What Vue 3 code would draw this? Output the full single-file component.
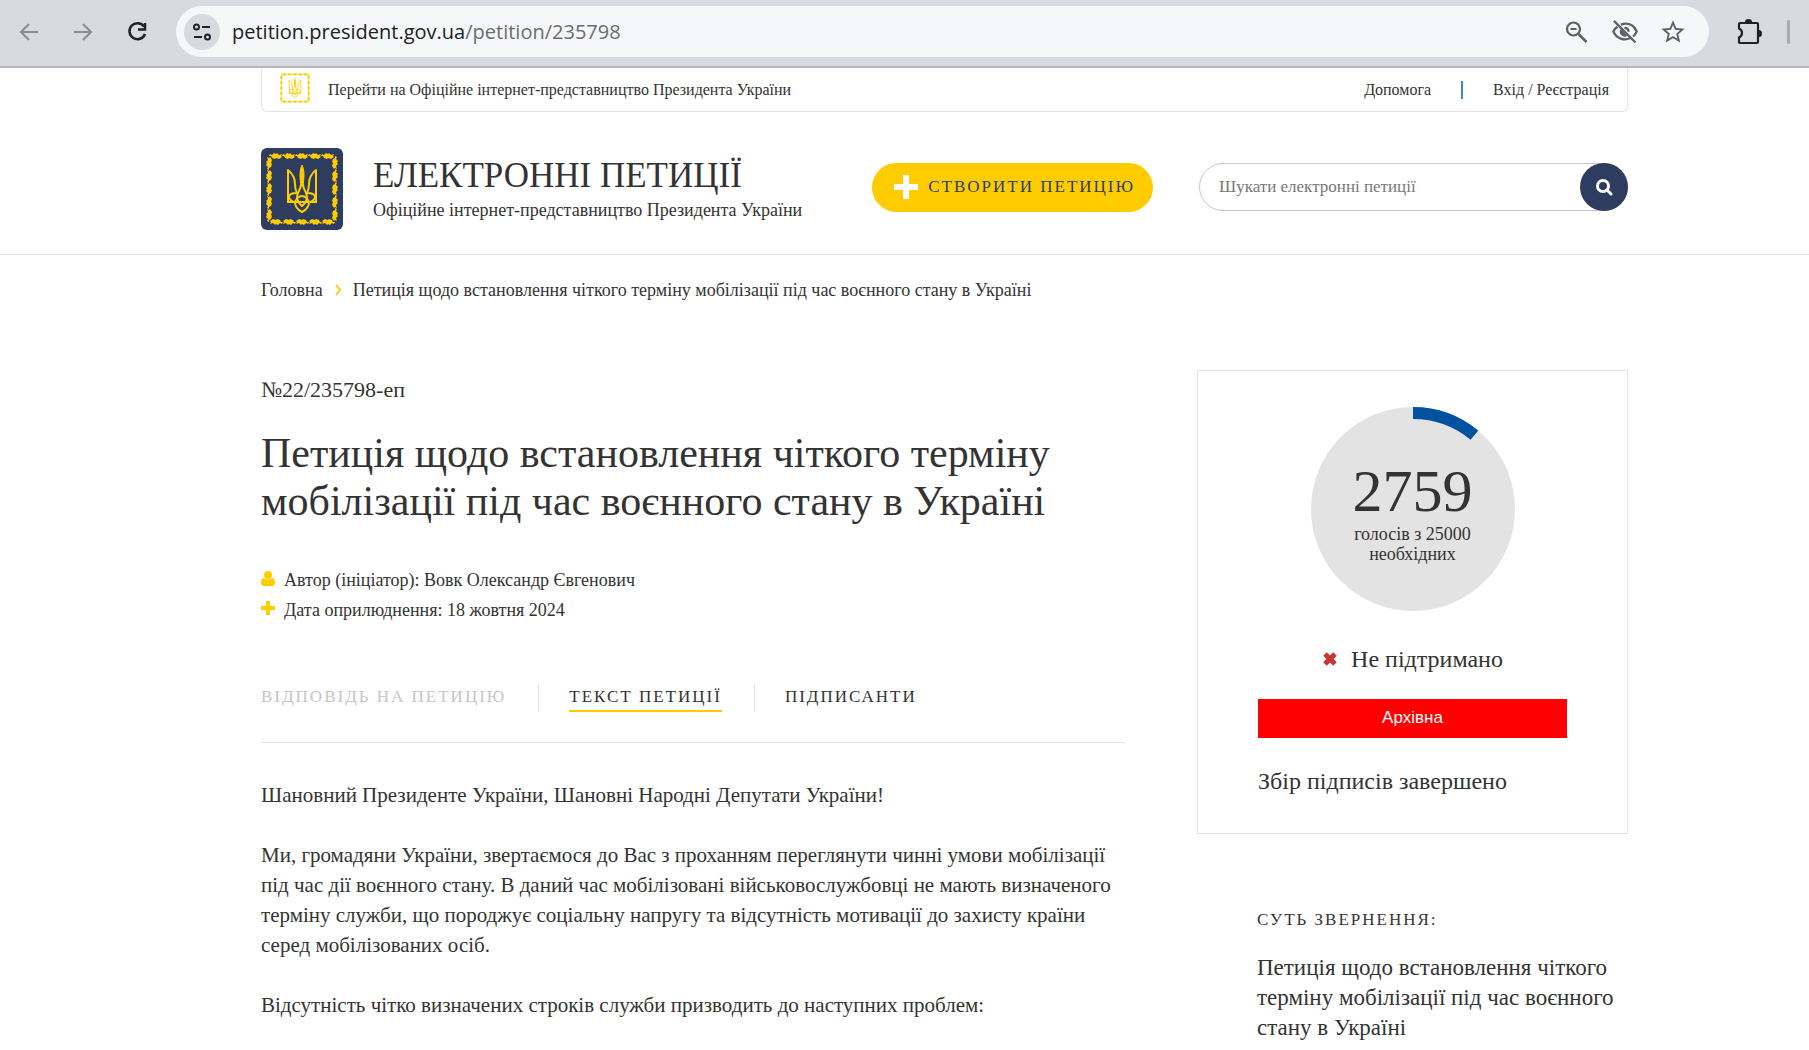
<script setup>
import { computed, ref } from "vue";

const title = "Петиція щодо встановлення чіткого терміну мобілізації під час воєнного стану в Україні";

const votes = 2759;
const required = 25000;

const tabs = [
  { id: "answer", label: "Відповідь на петицію", disabled: true },
  { id: "text", label: "Текст петиції", disabled: false },
  { id: "signers", label: "Підписанти", disabled: false },
];
const activeTab = ref("text");
const query = ref("");

const paragraphs = [
  "Шановний Президенте України, Шановні Народні Депутати України!",
  "Ми, громадяни України, звертаємося до Вас з проханням переглянути чинні умови мобілізації під час дії воєнного стану. В даний час мобілізовані військовослужбовці не мають визначеного терміну служби, що породжує соціальну напругу та відсутність мотивації до захисту країни серед мобілізованих осіб.",
  "Відсутність чітко визначених строків служби призводить до наступних проблем:",
];

// progress arc inside the votes circle
const radius = 96;
const circumference = 2 * Math.PI * radius;
const arc = computed(() => `${(votes / required) * circumference} ${circumference}`);

const leaf = "M0 1l2 1 2-2 2 1 1-1 2 2 3-1-1 2 1 1-3 2-3-1-1 1-3-1-1-2-2 0z";
const sides = [0, 90, 180, 270];
</script>

<template>
  <svg class="sprite" aria-hidden="true">
    <symbol id="emblem" viewBox="0 0 82 82">
      <g v-for="side in sides" :key="side" :transform="`rotate(${side} 41 41)`" fill="#fc0">
        <path v-for="n in 5" :key="n" :d="leaf" :transform="`translate(${n * 13 - 4} 5)`" />
      </g>
      <g fill="none" stroke="#fc0" stroke-width="2" stroke-linejoin="round">
        <path d="M27 54V22c5 4 7 8 7 14 0 4 1 7 2 9-5 0-8 1-8 4 0 2 3 5 6 5" />
        <path d="M55 54V22c-5 4-7 8-7 14 0 4-1 7-2 9 5 0 8 1 8 4 0 2-3 5-6 5" />
        <path d="M26 54h30" />
        <path d="M40 36c0 6-4 8-4 13s3 7 5 9c2-2 5-4 5-9s-4-7-4-13" />
        <path d="M34 54c0 5 3 8 7 10 4-2 7-5 7-10-1-3-4-6-7-6s-6 3-7 6z" />
      </g>
      <path d="M41 17c3 7 2 13 1 21h-2c-1-8-2-14 1-21z" fill="#fc0" stroke="#fc0" />
    </symbol>
  </svg>

  <div class="browser">
    <div class="browser-nav">
      <button class="icon-button muted" aria-label="Назад">
        <svg width="24" height="24" viewBox="0 0 24 24">
          <path d="M21 12H4M12 4l-8 8 8 8" stroke="currentColor" stroke-width="2" fill="none" />
        </svg>
      </button>
      <button class="icon-button muted" aria-label="Вперед">
        <svg width="24" height="24" viewBox="0 0 24 24">
          <path d="M3 12h17M12 4l8 8-8 8" stroke="currentColor" stroke-width="2" fill="none" />
        </svg>
      </button>
      <button class="icon-button" aria-label="Оновити">
        <svg width="24" height="24" viewBox="0 0 24 24">
          <path
            d="M19 6.500A8 8 0 1 0 20 14M13 9.500h7V3"
            stroke="currentColor"
            stroke-width="2.500"
            fill="none"
          />
        </svg>
      </button>
    </div>
    <div class="omnibox">
      <button class="site-info" aria-label="Відомості про сайт">
        <svg width="20" height="20" viewBox="0 0 20 20" fill="none" stroke="currentColor" stroke-width="2">
          <circle cx="4.500" cy="5" r="2.500" />
          <path d="M10 5h8M2 15h8" />
          <circle cx="15.500" cy="15" r="2.500" />
        </svg>
      </button>
      <div class="address">petition.president.gov.ua<span>/petition/235798</span></div>
      <div class="omnibox-actions">
        <button class="icon-button" aria-label="Масштаб">
          <svg width="28" height="28" viewBox="0 0 28 28" fill="none" stroke="currentColor">
            <circle cx="10.500" cy="11" r="6.500" stroke-width="2.200" />
            <path d="M15.500 16l8 8" stroke-width="2.500" />
            <path d="M7.500 11h6" stroke-width="2" />
          </svg>
        </button>
        <button class="icon-button" aria-label="Сторонні файли cookie">
          <svg width="28" height="28" viewBox="0 0 24 24">
            <g fill="none" stroke="currentColor" stroke-width="2">
              <path d="M8.500 5.600C16 3 20.500 7.500 22 11.500c-.7 1.800-1.700 3.200-3 4.300" />
              <path d="M5.500 7.500C3.800 8.700 2.700 10 2 11.500c2.500 6.200 9.500 8.300 14.500 5.700" />
              <path d="M11.500 8.500c2 0 3.500 1.300 3.600 3.300" />
              <path d="M2.500 2.500l18.500 18.500" />
            </g>
            <path d="M8.200 9.400a4.300 4.300 0 0 0 5.900 5.900z" fill="currentColor" />
          </svg>
        </button>
        <button class="icon-button" aria-label="Додати закладку">
          <svg width="28" height="28" viewBox="0 0 24 24" fill="currentColor">
            <path
              d="M22 9.240l-7.190-.62L12 2 9.190 8.630 2 9.240l5.460 4.730L5.820 21 12 17.270 18.180 21l-1.630-7.030zM12 15.400l-3.760 2.270 1-4.280-3.320-2.880 4.380-.38L12 6.100l1.710 4.040 4.380.38-3.320 2.880 1 4.280z"
            />
          </svg>
        </button>
      </div>
    </div>
    <div class="browser-tools">
      <button class="icon-button" aria-label="Розширення">
        <svg width="28" height="28" viewBox="0 0 28 28">
          <path
            d="M4 5h17q1 0 1 1v18q0 1-1 1H4q-1 0-1-1v-4.500c4-2 4-7 0-9V6q0-1 1-1z"
            stroke="currentColor"
            stroke-width="2.200"
            fill="none"
          />
          <path d="M9 4a3.500 3 0 0 1 7 0zM23 12a3 3.500 0 0 1 0 7z" fill="currentColor" />
        </svg>
      </button>
      <span class="browser-divider"></span>
    </div>
  </div>

  <div class="page">
    <div class="container">
      <div class="topbar">
        <a class="topbar-home" href="#">
          <svg width="34" height="34"><use href="#emblem" /></svg>
          Перейти на Офіційне інтернет-представництво Президента України
        </a>
        <nav class="topbar-links">
          <a href="#">Допомога</a>
          <span class="topbar-divider"></span>
          <a href="#">Вхід / Реєстрація</a>
        </nav>
      </div>
    </div>

    <header class="header">
      <div class="container header-inner">
        <a class="brand" href="#">
          <span class="brand-logo">
            <svg width="82" height="82"><use href="#emblem" /></svg>
          </span>
          <span class="brand-text">
            <span class="brand-title">Електронні петиції</span>
            <span class="brand-subtitle">Офіційне інтернет-представництво Президента України</span>
          </span>
        </a>
        <button class="create">
          <svg width="24" height="24" viewBox="0 0 24 24">
            <path d="M12 0v24M0 12h24" stroke="#fff" stroke-width="6" />
          </svg>
          Створити петицію
        </button>
        <form class="search" @submit.prevent>
          <input v-model="query" type="text" placeholder="Шукати електронні петиції" aria-label="Шукати електронні петиції" />
          <button aria-label="Шукати">
            <svg width="18" height="18" viewBox="0 0 18 18" fill="none" stroke="currentColor">
              <circle cx="8" cy="8" r="5.500" stroke-width="3" />
              <path d="M12 12l4 4" stroke-width="3" stroke-linecap="round" />
            </svg>
          </button>
        </form>
      </div>
    </header>

    <div class="container">
      <nav class="breadcrumbs">
        <a href="#">Головна</a>
        <svg width="8" height="12" viewBox="0 0 8 12">
          <path d="M2 1l4 5-4 5" stroke="#fc0" stroke-width="2" fill="none" />
        </svg>
        <span>{{ title }}</span>
      </nav>

      <div class="columns">
        <main class="petition">
          <div class="number">№22/235798-еп</div>
          <h1>{{ title }}</h1>

          <ul class="meta">
            <li>
              <svg width="14" height="18" viewBox="0 0 14 18" fill="#fc0">
                <circle cx="7" cy="4" r="4" />
                <path d="M3 7q4 3 8 0c2 0 3 2 3 5 0 2-1 3-3 3H3c-2 0-3-1-3-3 0-3 1-5 3-5z" />
              </svg>
              Автор (ініціатор): Вовк Олександр Євгенович
            </li>
            <li>
              <svg width="14" height="18" viewBox="0 0 14 18">
                <path d="M7 0v14M0 7h14" stroke="#fc0" stroke-width="4" />
              </svg>
              Дата оприлюднення: 18 жовтня 2024
            </li>
          </ul>

          <div class="tabs">
            <div v-for="tab in tabs" :key="tab.id" class="tab">
              <button
                :class="{ active: tab.id === activeTab }"
                :disabled="tab.disabled"
                @click="activeTab = tab.id"
              >
                {{ tab.label }}
              </button>
            </div>
          </div>

          <div class="text">
            <p v-for="paragraph in paragraphs" :key="paragraph">{{ paragraph }}</p>
          </div>
        </main>

        <aside class="sidebar">
          <div class="card">
            <div class="votes">
              <svg class="votes-ring" viewBox="0 0 204 204">
                <circle cx="102" cy="102" r="102" fill="#e3e3e3" />
                <circle
                  cx="102"
                  cy="102"
                  :r="radius"
                  fill="none"
                  stroke="#00519f"
                  stroke-width="12"
                  :stroke-dasharray="arc"
                  transform="rotate(-90 102 102)"
                />
              </svg>
              <div class="votes-count">{{ votes }}</div>
              <div class="votes-label">голосів з {{ required }}<br />необхідних</div>
            </div>
            <div class="status">
              <svg width="16" height="16" viewBox="0 0 16 16">
                <path d="M3 3l10 10M13 3L3 13" stroke="#cd3232" stroke-width="5" />
              </svg>
              Не підтримано
            </div>
            <div class="archive">Архівна</div>
            <div class="finished">Збір підписів завершено</div>
          </div>

          <section class="summary">
            <h2>Суть звернення:</h2>
            <p>{{ title }}</p>
          </section>
        </aside>
      </div>
    </div>
  </div>
</template>

<style>
body {
  margin: 0;
  background: #fff;
}
</style>

<style scoped>
.sprite {
  position: absolute;
  width: 0;
  height: 0;
}

button {
  border: none;
  background: none;
  padding: 0;
  font: inherit;
  color: inherit;
  cursor: pointer;
}

a {
  color: inherit;
  text-decoration: none;
}

svg {
  display: block;
  flex: none;
}

/* browser toolbar */
.browser {
  display: flex;
  align-items: center;
  height: 66px;
  box-sizing: border-box;
  padding: 0 19px 3px 17px;
  background: #d9dae0;
  color: #202124;
}

.browser-nav {
  display: flex;
  gap: 30px;
  margin-right: 27px;
}

.muted {
  color: #8b8c91;
}

.omnibox {
  flex: 1;
  display: flex;
  align-items: center;
  height: 51px;
  padding: 0 22px 0 8px;
  border-radius: 26px;
  background: #f6f7f9;
}

.site-info {
  display: flex;
  align-items: center;
  justify-content: center;
  width: 36px;
  height: 36px;
  border-radius: 50%;
  background: #d9dae0;
}

.address {
  flex: 1;
  margin-left: 12px;
  font: 20px/28px "Open Sans", "Noto Sans", sans-serif;
}

.address span {
  color: #6b6c70;
}

.omnibox-actions {
  display: flex;
  gap: 20px;
  color: #5f6064;
}

.browser-tools {
  display: flex;
  align-items: center;
  gap: 23px;
  margin-left: 27px;
}

.browser-divider {
  width: 3px;
  height: 24px;
  border-radius: 2px;
  background: #a8abb7;
}

/* site */
.page {
  border-top: 2px solid #b6b6bc;
  font-family: "Liberation Serif", serif;
  font-size: 18px;
  color: #333;
}

.container {
  padding: 0 181px 0 261px;
}

.topbar {
  display: flex;
  align-items: center;
  justify-content: space-between;
  height: 43px;
  padding: 0 18px 0 16px;
  border: 1px solid #e3e3e3;
  border-top: none;
  border-radius: 0 0 6px 6px;
  font-size: 16px;
}

.topbar-home,
.topbar-links {
  display: flex;
  align-items: center;
}

.topbar-home {
  gap: 16px;
}

.topbar-home svg {
  margin-bottom: 4px;
}

.topbar-links {
  gap: 30px;
}

.topbar-divider {
  width: 2px;
  height: 18px;
  background: #3c87c6;
}

.header {
  border-bottom: 1px solid #e3e3e3;
}

.header-inner {
  display: flex;
  align-items: center;
  height: 134px;
  padding-top: 8px;
}

.brand {
  display: flex;
  align-items: center;
  gap: 30px;
  padding-top: 3px;
}

.brand-logo {
  border-radius: 6px;
  background: #2e3d5f;
}

.brand-text {
  padding-top: 3px;
}

.brand-title,
.brand-subtitle {
  display: block;
  white-space: nowrap;
}

.brand-title {
  font-size: 35px;
  line-height: 40px;
  text-transform: uppercase;
}

.brand-subtitle {
  font-size: 18px;
  line-height: 28px;
}

.create {
  display: flex;
  align-items: center;
  gap: 10px;
  height: 49px;
  margin: 0 46px 0 auto;
  padding: 0 18px 0 22px;
  border-radius: 25px;
  background: #fc0;
  color: #2e3d5f;
  font-size: 17px;
  letter-spacing: 2px;
  text-transform: uppercase;
  white-space: nowrap;
}

.search {
  display: flex;
  width: 429px;
  height: 48px;
  box-sizing: border-box;
  border: 1px solid #c9c3d6;
  border-radius: 24px;
}

.search input {
  flex: 1;
  min-width: 0;
  padding: 0 19px;
  border: none;
  outline: none;
  background: none;
  font: inherit;
  font-size: 17px;
}

.search input::placeholder {
  color: #777;
}

.search button {
  display: flex;
  align-items: center;
  justify-content: center;
  width: 48px;
  height: 48px;
  margin: -1px;
  border-radius: 50%;
  background: #2e3d5f;
  color: #fff;
}

.breadcrumbs {
  display: flex;
  align-items: center;
  gap: 11px;
  padding-top: 23px;
  line-height: 24px;
}

.columns {
  display: flex;
  gap: 72px;
  margin-top: 68px;
}

.petition {
  flex: 1;
  min-width: 0;
}

.number {
  margin-top: 6px;
  font-size: 22px;
  line-height: 28px;
}

h1 {
  margin: 25px 0 0;
  font-size: 42px;
  font-weight: 400;
  line-height: 48px;
}

.meta {
  margin: 40px 0 0;
  padding: 0;
  list-style: none;
  line-height: 30px;
}

.meta li {
  display: flex;
  align-items: center;
  gap: 9px;
}

.tabs {
  display: flex;
  margin-top: 59px;
  padding-bottom: 30px;
  border-bottom: 1px solid #e3e3e3;
}

.tab + .tab {
  margin-left: 32px;
  padding-left: 30px;
  border-left: 1px solid #e3e3e3;
}

.tab button {
  height: 28px;
  border-bottom: 2px solid transparent;
  font-size: 17px;
  letter-spacing: 2px;
  text-transform: uppercase;
}

.tab button.active {
  border-color: #fc0;
}

.tab button:disabled {
  color: #c6c6c6;
  cursor: default;
}

.text {
  margin-top: 37px;
  font-size: 21px;
  line-height: 30px;
}

.text p {
  margin: 0 0 30px;
}

.sidebar {
  width: 431px;
}

.card {
  padding: 36px 60px;
  border: 1px solid #e3e3e3;
}

.votes {
  display: flex;
  flex-direction: column;
  align-items: center;
  justify-content: center;
  position: relative;
  width: 204px;
  height: 204px;
  box-sizing: border-box;
  padding-top: 4px;
  margin: 0 auto;
  text-align: center;
}

.votes-ring {
  position: absolute;
  inset: 0;
}

.votes-count,
.votes-label {
  position: relative;
}

.votes-count {
  font-size: 60px;
  line-height: 66px;
}

.votes-label {
  font-size: 18px;
  line-height: 20px;
}

.status,
.finished {
  font-size: 24px;
  line-height: 30px;
}

.status {
  display: flex;
  align-items: center;
  justify-content: center;
  gap: 13px;
  margin: 33px 0 25px;
}

.archive {
  padding-bottom: 1px;
  background: #f00;
  color: #fff;
  font: 17px/38px "Liberation Sans", sans-serif;
  text-align: center;
}

.finished {
  margin: 28px 0 1px;
}

.summary {
  margin-top: 72px;
  padding-left: 60px;
}

.summary h2 {
  margin: 0 0 19px;
  font-size: 17px;
  font-weight: 400;
  line-height: 28px;
  letter-spacing: 2px;
  text-transform: uppercase;
}

.summary p {
  margin: 0;
  font-size: 23px;
  line-height: 30px;
}
</style>
